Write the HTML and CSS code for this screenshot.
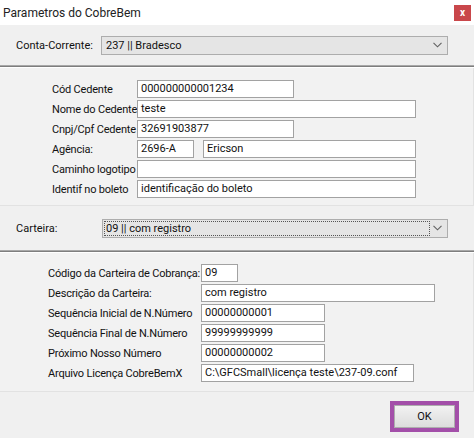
FILE: index.html
```html
<!DOCTYPE html>
<html lang="pt">
<head>
<meta charset="utf-8">
<title>Parametros do CobreBem</title>
<link rel="stylesheet" href="styles.css">
</head>
<body>
<div class="win">
  <div class="titlebar">
    <span class="title">Parametros do CobreBem</span>
    <span class="close">x</span>
  </div>
  <div class="toprow">
    <span class="lbl-top">Conta-Corrente:</span>
    <div class="select sel-conta">
      <span class="sel-text">237 || Bradesco</span>
      <svg class="chev" width="9" height="6" viewBox="0 0 9 6"><path d="M0.5 0.8 L4.5 4.8 L8.5 0.8" fill="none" stroke="#606060" stroke-width="1.1"/></svg>
    </div>
  </div>
  <div class="sep"></div>
  <div class="panel p1">
    <div class="row"><span class="lbl">Cód Cedente</span><div class="inp w156">000000000001234</div></div>
    <div class="row"><span class="lbl">Nome do Cedente</span><div class="inp w278">teste</div></div>
    <div class="row"><span class="lbl">Cnpj/Cpf Cedente</span><div class="inp w156">32691903877</div></div>
    <div class="row"><span class="lbl">Agência:</span><div class="pair"><div class="inp w56">2696-A</div><div class="inp w213">Ericson</div></div></div>
    <div class="row"><span class="lbl">Caminho logotipo</span><div class="inp w278"></div></div>
    <div class="row"><span class="lbl">Identif no boleto</span><div class="inp w278">identificação do boleto</div></div>
  </div>
  <div class="carteira">
    <span class="lbl-cart">Carteira:</span>
    <div class="select sel-cart">
      <span class="focus">09 || com registro</span>
      <svg class="chev" width="9" height="6" viewBox="0 0 9 6"><path d="M0.5 0.8 L4.5 4.8 L8.5 0.8" fill="none" stroke="#606060" stroke-width="1.1"/></svg>
    </div>
  </div>
  <div class="sep"></div>
  <div class="panel p2">
    <div class="row"><span class="lbl">Código da Carteira de Cobrança:</span><div class="inp w36">09</div></div>
    <div class="row"><span class="lbl">Descrição da Carteira:</span><div class="inp w233">com registro</div></div>
    <div class="row"><span class="lbl">Sequência Inicial de N.Número</span><div class="inp w123">00000000001</div></div>
    <div class="row"><span class="lbl">Sequência Final de N.Número</span><div class="inp w123">99999999999</div></div>
    <div class="row"><span class="lbl">Próximo Nosso Número</span><div class="inp w123">00000000002</div></div>
    <div class="row"><span class="lbl">Arquivo Licença CobreBemX</span><div class="inp w213">C:\GFCSmall\licença teste\237-09.conf</div></div>
  </div>
  <div class="footer">
    <div class="okwrap"><button class="ok">OK</button></div>
  </div>
</div>
</body>
</html>
```

FILE: styles.css
```css
html, body {
  margin: 0;
  padding: 0;
}
body {
  background: #f0f0f0;
  font-family: Roboto, "Noto Sans", sans-serif;
  font-size: 11px;
  color: #111;
}
.win {
  width: 474px;
  height: 438px;
  display: flex;
  flex-direction: column;
  overflow: hidden;
}
.titlebar {
  height: 25px;
  background: #ffffff;
  display: flex;
  align-items: center;
  justify-content: space-between;
  padding: 0 3px 0 3px;
  box-sizing: border-box;
}
.title {
  font-size: 12px;
  color: #222;
}
.close {
  width: 17px;
  height: 16px;
  background: #c9474b;
  color: #fff;
  font-size: 10px;
  font-weight: bold;
  display: flex;
  align-items: center;
  justify-content: center;
  line-height: 1;
}
.toprow {
  height: 40px;
  display: flex;
  align-items: center;
  padding-left: 16px;
  box-sizing: border-box;
}
.lbl-top {
  width: 85px;
  white-space: nowrap;
}
.select {
  height: 19px;
  box-sizing: border-box;
  background: #e5e5e5;
  border: 1px solid #adadad;
  display: flex;
  align-items: center;
  justify-content: space-between;
  padding: 0 5px 0 4px;
}
.sel-conta {
  width: 347px;
}
.sel-text {
  line-height: 17px;
}
.chev {
  display: block;
}
.sep {
  height: 1px;
  background: #7e7e7e;
  border-top: 1px solid #a8a8a8;
  border-bottom: 1px solid #ffffff;
}
.panel {
  display: flex;
  flex-direction: column;
  gap: 2px;
  box-sizing: border-box;
  border-right: 1px solid #e2e2e2;
  border-bottom: 1px solid #e2e2e2;
  background: #f2f2f2;
}
.p1 {
  height: 138px;
  padding: 12px 0 0 52px;
}
.p2 {
  height: 139px;
  padding: 11px 0 0 48px;
}
.row {
  display: flex;
  align-items: center;
  height: 18px;
}
.lbl {
  white-space: nowrap;
  flex: 0 0 auto;
  letter-spacing: -0.2px;
}
.p1 .lbl {
  width: 85px;
}
.p2 .lbl {
  width: 153px;
}
.pair {
  display: flex;
  gap: 9px;
}
.inp {
  height: 18px;
  box-sizing: border-box;
  background: #ffffff;
  border: 1px solid #a2a2a2;
  padding: 0 3px;
  line-height: 16px;
  white-space: nowrap;
  overflow: hidden;
  flex: 0 0 auto;
}
.w36 { width: 37px; }
.w56 { width: 57px; }
.w123 { width: 124px; }
.w156 { width: 157px; }
.w213 { width: 213px; }
.w233 { width: 234px; }
.w278 { width: 279px; }
.carteira {
  height: 44px;
  display: flex;
  align-items: center;
  padding-left: 16px;
  box-sizing: border-box;
}
.lbl-cart {
  width: 86px;
}
.sel-cart {
  width: 346px;
  padding: 0 5px 0 1px;
}
.focus {
  flex: 0 0 auto;
  width: 326px;
  height: 15px;
  box-sizing: border-box;
  border: 1px dotted #555;
  line-height: 13px;
  padding-left: 1px;
}
.footer {
  flex: 1;
  display: flex;
  justify-content: flex-end;
  align-items: flex-start;
  padding: 9px 15px 0 0;
  box-sizing: border-box;
}
.okwrap {
  border: 4px solid #a34fa9;
  width: 69px;
  height: 31px;
  box-sizing: border-box;
  display: flex;
}
.ok {
  flex: 1;
  margin: 0;
  border: 1px solid #adadad;
  background: linear-gradient(#f2f2f2, #dcdcdc);
  font-family: Roboto, "Noto Sans", sans-serif;
  font-size: 11px;
  color: #111;
  padding: 0;
}
```
